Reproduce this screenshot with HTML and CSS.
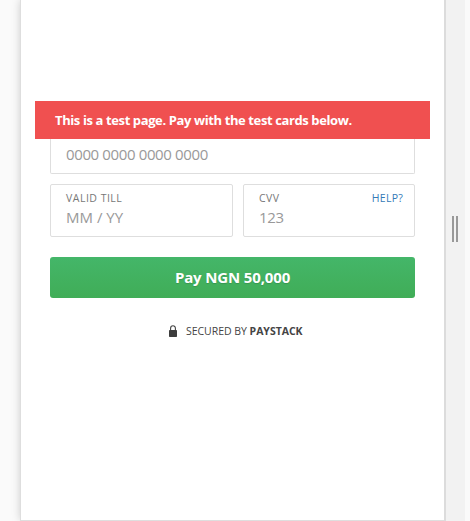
FILE: index.html
```html
<!DOCTYPE html>
<html lang="en">
<head>
<meta charset="utf-8">
<title>Checkout</title>
<link rel="stylesheet" href="styles.css">
</head>
<body>
<div class="viewport">
  <main class="panel">
    <div class="alert"><span>This is a test page. Pay with the test cards below.</span></div>
    <form class="checkout">
      <div class="field card-number"><span class="value">0000 0000 0000 0000</span></div>
      <div class="row">
        <div class="field expiry">
          <div class="label"><span>VALID TILL</span></div>
          <div class="value date">MM / YY</div>
        </div>
        <div class="field cvv">
          <div class="label"><span>CVV</span><a class="help">HELP?</a></div>
          <div class="value">123</div>
        </div>
      </div>
      <button class="pay" type="button"><span>Pay NGN 50,000</span></button>
    </form>
    <footer class="secured">
      <svg class="lock" viewBox="0 0 8 12" width="8" height="12"><path d="M1.6 6V3.2a2.4 2.4 0 0 1 4.8 0V6" fill="none" stroke="#444" stroke-width="1.1"/><rect y="5" width="8" height="7" rx=".7" fill="#3c3c3c"/></svg>
      <span>SECURED BY <b>PAYSTACK</b></span>
    </footer>
  </main>
  <aside class="resizer"><i></i><i></i></aside>
</div>
</body>
</html>
```
FILE: styles.css
```css
* { box-sizing: border-box; }
body {
  margin: 0;
  background: #fafafa;
  font-family: "Open Sans", "Noto Sans", sans-serif;
  overflow: hidden;
}
.viewport { display: flex; height: 521px; padding-left: 21px; }
.panel {
  width: 423px;
  height: 520px;
  padding: 101px 14px 0;
  background: #fff;
  box-shadow: 0 0 0 1px #dedede, 0 0 9px rgba(0, 0, 0, .22);
}
.alert {
  height: 38px;
  padding-left: 20px;
  background: #f05050;
  color: #fff;
  font-size: 13px;
  font-weight: 700;
  line-height: 39px;
  white-space: nowrap;
  letter-spacing: -.39px;
}
.checkout { padding: 0 15px; }
.field { border: 1px solid #dedede; border-radius: 2px; padding-left: 15px; }
.card-number { height: 35px; border-top: 0; border-radius: 0 0 2px 2px; line-height: 30px; }
.value { color: #999; font-size: 15px; white-space: nowrap; letter-spacing: -.37px; }
.date { letter-spacing: 0; }
.row { display: flex; gap: 10px; margin-top: 10px; }
.row .field { height: 53px; padding-top: 5px; }
.expiry { width: 183px; }
.cvv { width: 172px; }
.row .value { line-height: 22px; margin-top: 0; }
.label {
  display: flex;
  justify-content: space-between;
  padding-right: 11px;
  color: #777;
  font-size: 10.5px;
  line-height: 16px;
  letter-spacing: .5px;
}
.help { color: #337ab7; letter-spacing: .25px; }
.pay {
  display: block;
  width: 365px;
  height: 41px;
  margin-top: 20px;
  padding: 0;
  border: 0;
  border-radius: 3px;
  background: linear-gradient(#44b669, #40ad57);
  color: #fff;
  font: 700 15px/41px "Open Sans", sans-serif;
  letter-spacing: -.15px;
  text-shadow: 0 1px 1px rgba(0, 0, 0, .15);
}
.secured {
  display: flex;
  align-items: center;
  margin: 25px 0 0 134px;
  height: 16px;
  color: #444;
  font-size: 10.5px;
  white-space: nowrap;
  letter-spacing: -.03px;
}
.lock { margin-right: 9px; }
.resizer {
  display: flex;
  align-items: center;
  gap: 2px;
  width: 21px;
  height: 521px;
  padding: 0 0 63px 6px;
  background: #f2f2f2;
  border-left: 2px solid #dcdcdc;
  position: relative;
}
.resizer i { width: 2px; height: 26px; background: #999; }
```
